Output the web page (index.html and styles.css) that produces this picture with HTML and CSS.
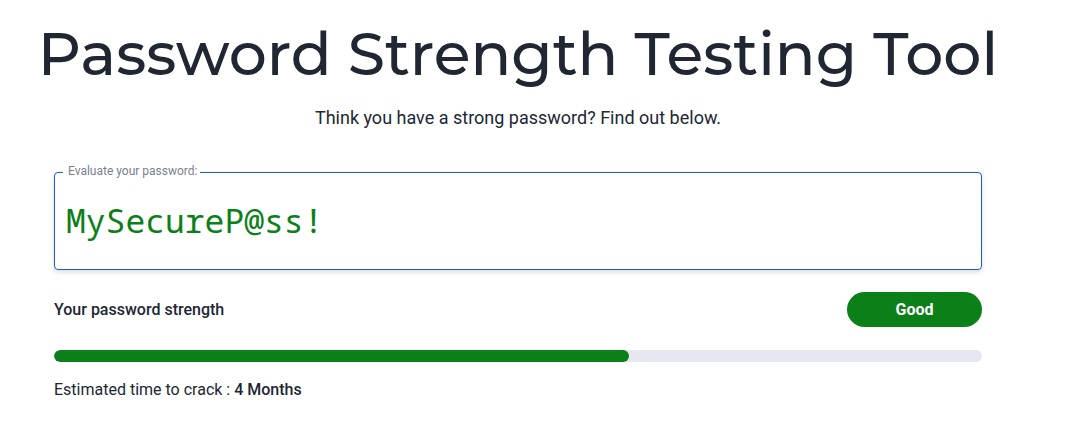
FILE: index.html
```html
<!DOCTYPE html>
<html lang="en">
<head>
<meta charset="utf-8">
<meta name="viewport" content="width=device-width, initial-scale=1">
<title>Password Strength Testing Tool</title>
<link rel="stylesheet" href="styles.css">
</head>
<body>
<main class="tool">
  <h1 class="title">Password Strength Testing Tool</h1>
  <p class="intro">Think you have a strong password? Find out below.</p>
  <form class="checker">
    <div class="field">
      <label class="field-label" for="password">Evaluate your password:</label>
      <input class="field-input" id="password" type="text" value="MySecureP@ss!" autocomplete="off" spellcheck="false">
    </div>
    <div class="result">
      <span class="result-label">Your password strength</span>
      <span class="badge">Good</span>
    </div>
    <div class="meter" role="progressbar" aria-label="Password strength" aria-valuenow="62" aria-valuemin="0" aria-valuemax="100">
      <div class="meter-fill" style="width: 62%"></div>
    </div>
    <p class="estimate">Estimated time to crack : <strong class="estimate-value">4 Months</strong></p>
  </form>
</main>
</body>
</html>
```
FILE: styles.css
```css
* {
  box-sizing: border-box;
}

body {
  margin: 0;
  background: #fff;
  color: #202733;
  font-family: Roboto, "Liberation Sans", sans-serif;
  font-size: 16px;
  line-height: 24px;
}

.tool {
  padding: 16px 86px 24px 54px;
}

.title {
  margin: 0 -54px;
  font-family: Montserrat, Inter, sans-serif;
  font-size: 60px;
  font-weight: 500;
  line-height: 76px;
  text-align: center;
  white-space: nowrap;
}

.intro {
  margin: 12px 0 0;
  font-size: 18px;
  line-height: 28px;
  text-align: center;
}

.checker {
  margin-top: 40px;
}

.field {
  position: relative;
}

.field-label {
  position: absolute;
  top: -9px;
  left: 9px;
  padding: 0 3px 0 5px;
  background: #fff;
  color: #7a7f92;
  font-size: 12px;
  line-height: 16px;
}

.field-input {
  display: block;
  width: 100%;
  height: 98px;
  padding: 0 11px 2px;
  border: 1px solid #1a5cd8;
  border-radius: 4px;
  outline: 0;
  background: #fff;
  box-shadow: 0 2px 5px rgba(0, 0, 0, 0.15);
  color: #0c8018;
  font-family: "Noto Sans Mono", "DejaVu Sans Mono", monospace;
  font-size: 33px;
}

.result {
  display: flex;
  align-items: center;
  justify-content: space-between;
  margin-top: 22px;
}

.result-label {
  font-weight: 500;
}

.badge {
  width: 135px;
  border-radius: 18px;
  background: #0c8018;
  color: #fff;
  font-weight: 700;
  line-height: 35px;
  text-align: center;
}

.meter {
  height: 12px;
  margin-top: 23px;
  border-radius: 6px;
  background: #e5e8f0;
  overflow: hidden;
}

.meter-fill {
  height: 100%;
  border-radius: 6px;
  background: #0c8018;
}

.estimate {
  margin: 16px 0 0;
}

.estimate-value {
  font-weight: 500;
}
```
